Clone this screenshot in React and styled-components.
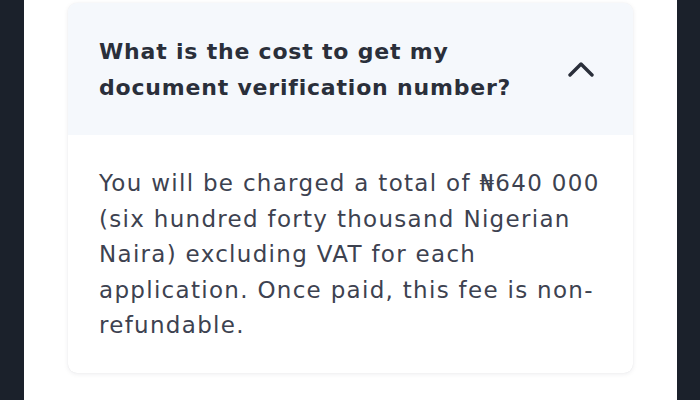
import React from "react";
import styled, { createGlobalStyle } from "styled-components";

const Global = createGlobalStyle`
  html, body { margin: 0; padding: 0; }
  body { width: 700px; height: 400px; overflow: hidden; background: #ffffff; }
`;

const Frame = styled.div`
  display: flex;
  width: 700px;
  height: 400px;
`;

const Bezel = styled.div`
  width: ${(p) => p.$w}px;
  background: #1b212b;
  flex-shrink: 0;
`;

const Screen = styled.div`
  flex: 1;
  background: #ffffff;
  padding: 3px 44px 0 44px;
  box-sizing: border-box;
`;

const Card = styled.div`
  border-radius: 9px;
  background: #ffffff;
  box-shadow: 0 1px 5px rgba(20, 30, 50, 0.08), 0 0 1px rgba(20, 30, 50, 0.1);
  overflow: hidden;
`;

const Header = styled.div`
  display: flex;
  align-items: center;
  justify-content: space-between;
  background: #f5f8fc;
  height: 132px;
  padding: 0 39px 0 31px;
  box-sizing: border-box;
`;

const Question = styled.div`
  font-family: "DejaVu Sans", sans-serif;
  font-weight: 700;
  font-size: 22px;
  line-height: 36px;
  color: #2a2f3a;
  letter-spacing: 0.8px;
  padding-top: 1px;
`;

const Body = styled.div`
  padding: 31px 20px 29px 31px;
  font-family: "DejaVu Sans", sans-serif;
  font-size: 23px;
  line-height: 35.5px;
  color: #3d4250;
  letter-spacing: 1.3px;
  white-space: nowrap;
`;

const Chevron = () => (
  <svg width="26" height="16" viewBox="0 0 26 16" fill="none">
    <path d="M2 14 L13 3 L24 14" stroke="#2a2f3a" strokeWidth="3.4" strokeLinecap="round" strokeLinejoin="round" />
  </svg>
);

export default function App() {
  return (
    <>
      <Global />
      <Frame>
        <Bezel $w={24} />
        <Screen>
          <Card>
            <Header>
              <Question>
                What is the cost to get my
                <br />
                document verification number?
              </Question>
              <Chevron />
            </Header>
            <Body>
              You will be charged a total of ₦640 000
              <br />
              (six hundred forty thousand Nigerian
              <br />
              Naira) excluding VAT for each
              <br />
              application. Once paid, this fee is non-
              <br />
              refundable.
            </Body>
          </Card>
        </Screen>
        <Bezel $w={23} />
      </Frame>
    </>
  );
}
